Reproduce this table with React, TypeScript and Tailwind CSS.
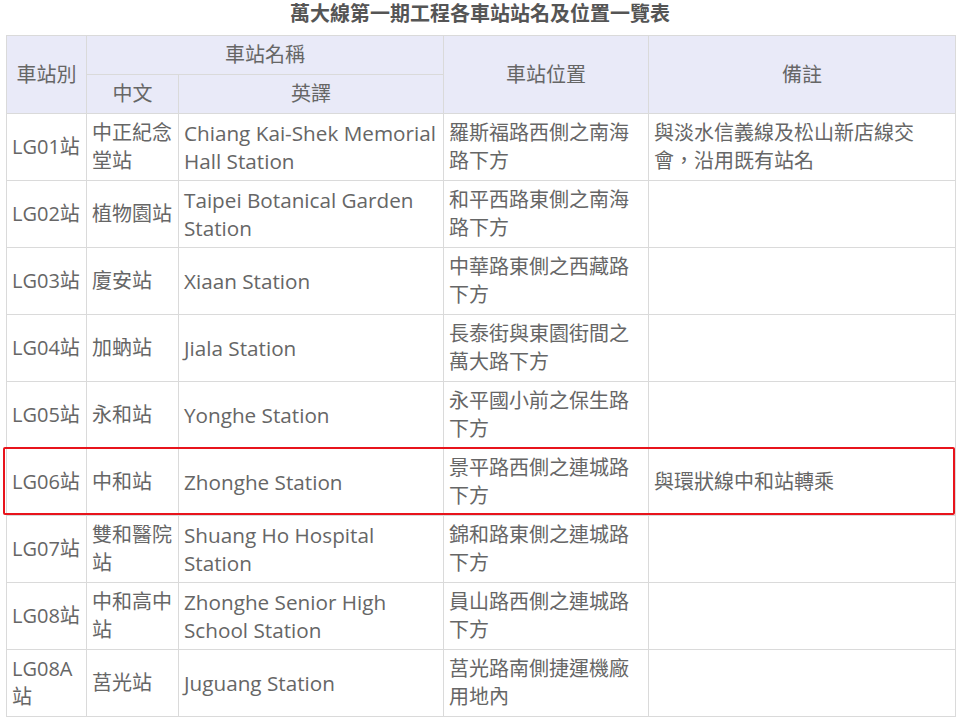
const FONT = '"Open Sans", "Noto Sans CJK TC", sans-serif';

type Row = {
  code: string;
  zh: string;
  en: string;
  location: string;
  note?: string;
};

const ROWS: Row[] = [
  {
    code: "LG01站",
    zh: "中正紀念堂站",
    en: "Chiang Kai-Shek Memorial Hall Station",
    location: "羅斯福路西側之南海路下方",
    note: "與淡水信義線及松山新店線交會，沿用既有站名",
  },
  { code: "LG02站", zh: "植物園站", en: "Taipei Botanical Garden Station", location: "和平西路東側之南海路下方" },
  { code: "LG03站", zh: "廈安站", en: "Xiaan Station", location: "中華路東側之西藏路下方" },
  { code: "LG04站", zh: "加蚋站", en: "Jiala Station", location: "長泰街與東園街間之萬大路下方" },
  { code: "LG05站", zh: "永和站", en: "Yonghe Station", location: "永平國小前之保生路下方" },
  {
    code: "LG06站",
    zh: "中和站",
    en: "Zhonghe Station",
    location: "景平路西側之連城路下方",
    note: "與環狀線中和站轉乘",
  },
  { code: "LG07站", zh: "雙和醫院站", en: "Shuang Ho Hospital Station", location: "錦和路東側之連城路下方" },
  { code: "LG08站", zh: "中和高中站", en: "Zhonghe Senior High School Station", location: "員山路西側之連城路下方" },
  { code: "LG08A站", zh: "莒光站", en: "Juguang Station", location: "莒光路南側捷運機廠用地內" },
];

const cell = "border border-[#dadada] px-[5px] align-middle";

export default function App() {
  return (
    <div
      className="relative w-[960px] h-[721px] bg-white text-[#666] overflow-hidden"
      style={{ fontFamily: FONT }}
    >
      <h1 className="text-center text-[20px] font-bold leading-[28px] mb-[7px] text-[#555]">
        萬大線第一期工程各車站站名及位置一覽表
      </h1>
      <table className="ml-[6px] w-[949px] table-fixed border-collapse text-[20px] leading-[28px]">
        <colgroup>
          <col className="w-[80px]" />
          <col className="w-[92px]" />
          <col className="w-[265px]" />
          <col className="w-[205px]" />
          <col className="w-[307px]" />
        </colgroup>
        <thead className="bg-[#e9eaf8]">
          <tr className="h-[39px]">
            <th rowSpan={2} className={`${cell} font-normal text-center`}>車站別</th>
            <th colSpan={2} className={`${cell} font-normal text-center`}>車站名稱</th>
            <th rowSpan={2} className={`${cell} font-normal text-center`}>車站位置</th>
            <th rowSpan={2} className={`${cell} font-normal text-center`}>備註</th>
          </tr>
          <tr className="h-[39px]">
            <th className={`${cell} font-normal text-center`}>中文</th>
            <th className={`${cell} font-normal text-center`}>英譯</th>
          </tr>
        </thead>
        <tbody>
          {ROWS.map((r) => (
            <tr key={r.code} className="h-[67px]">
              <td className={cell}>{r.code}</td>
              <td className={cell}>{r.zh}</td>
              <td className={`${cell} text-[20.7px]`}>{r.en}</td>
              <td className={cell}>{r.location}</td>
              <td className={cell}>{r.note}</td>
            </tr>
          ))}
        </tbody>
      </table>

      {/* highlight around LG06 */}
      <div className="absolute left-[3px] top-[447px] w-[952px] h-[68px] border-2 border-[#e8141c] rounded-[2px] pointer-events-none" />
    </div>
  );
}
